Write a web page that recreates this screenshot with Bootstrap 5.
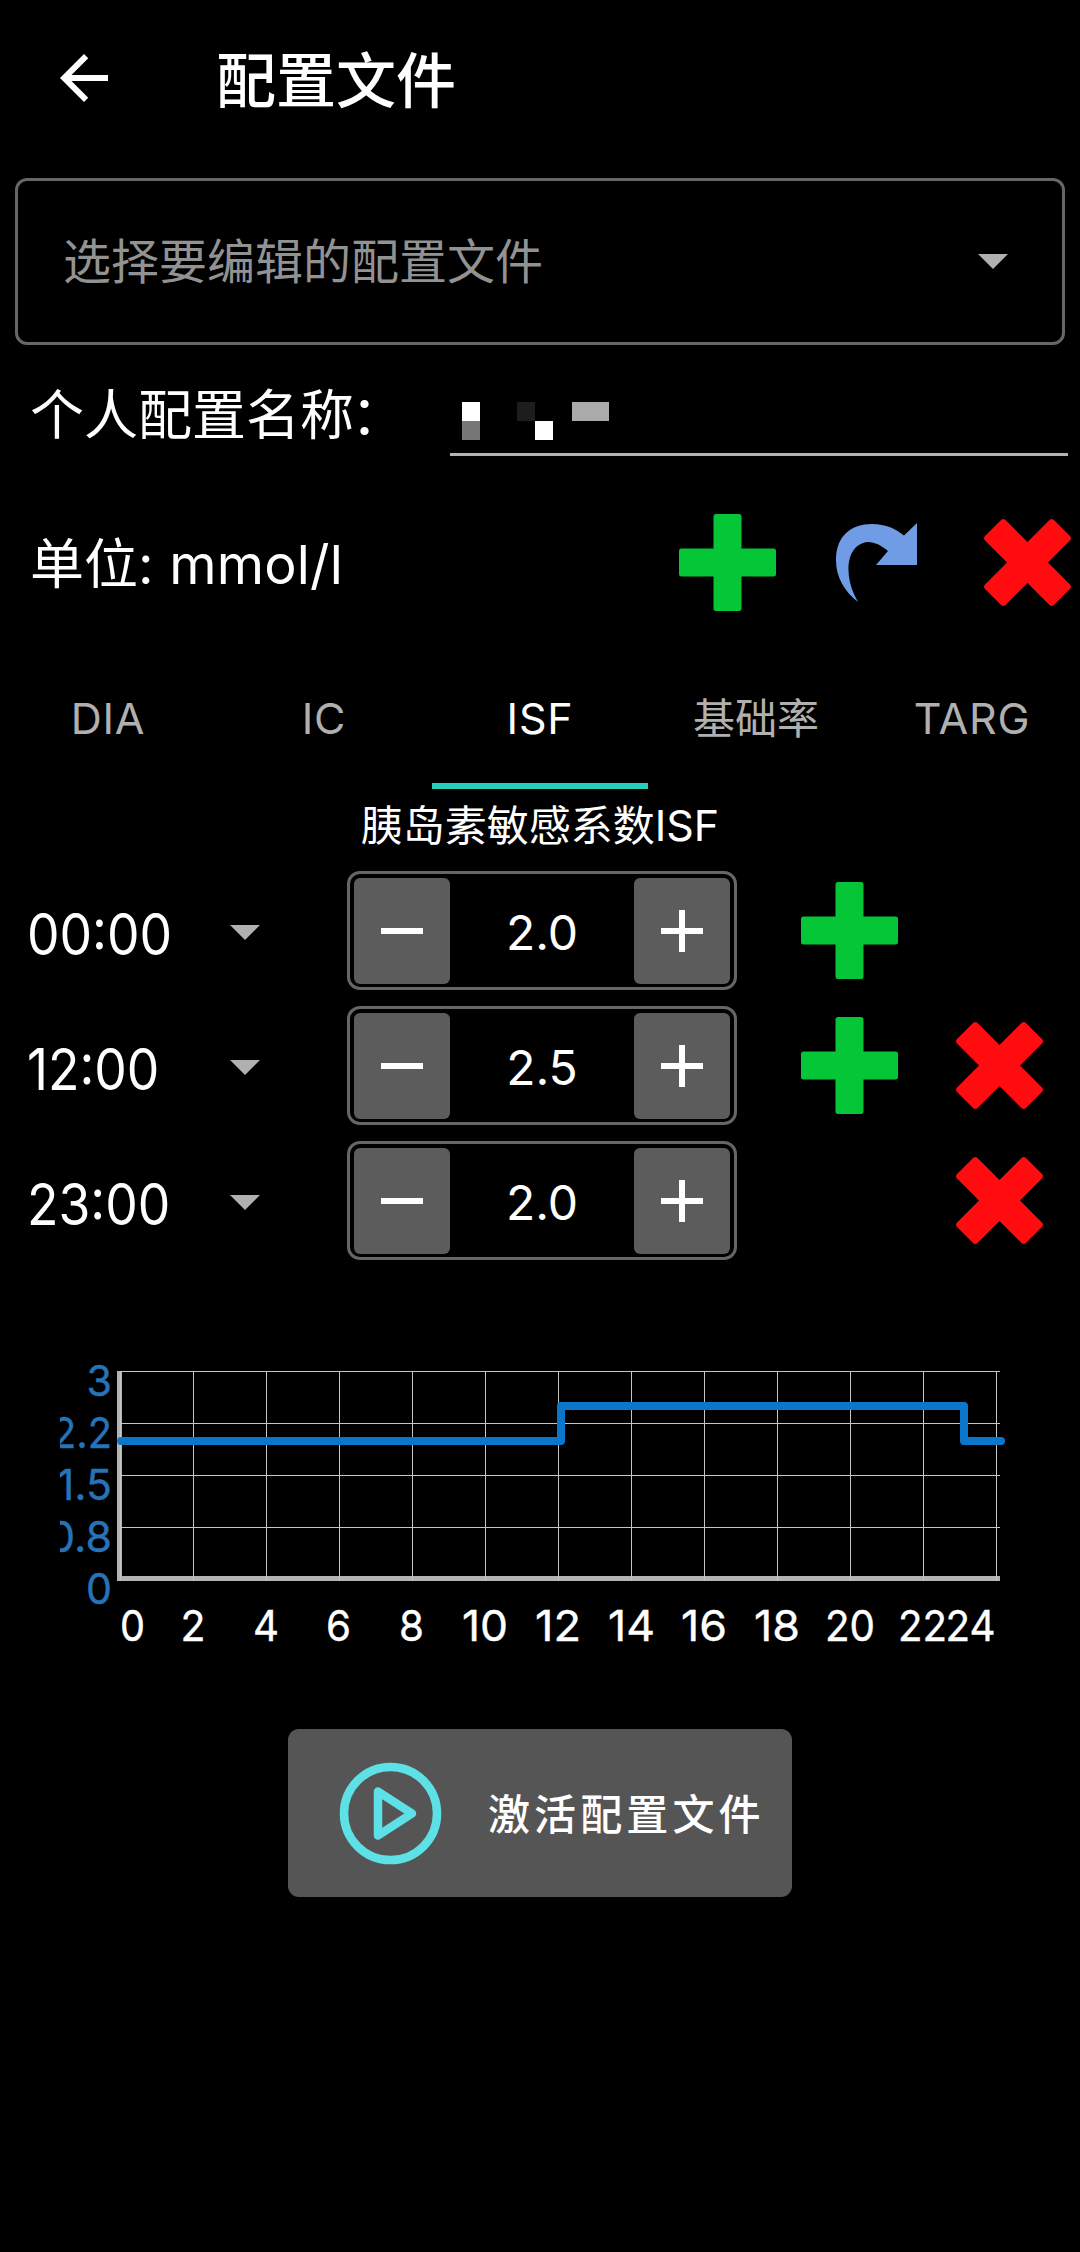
<!DOCTYPE html>
<html lang="zh-CN" data-bs-theme="dark">
<head>
<meta charset="utf-8">
<meta name="viewport" content="width=device-width, initial-scale=1">
<title>配置文件</title>
<link href="https://cdn.jsdelivr.net/npm/bootstrap@5.3.0/dist/css/bootstrap.min.css" rel="stylesheet">
<style>
  body { background: #000; color: #fff; font-family: "Inter", "Noto Sans CJK SC", sans-serif; line-height: 1; }
  .screen { width: 1080px; height: 2252px; overflow: hidden; }
  svg { display: block; flex: none; }
  .top-bar { height: 156px; padding-left: 48px; gap: 96px; }
  .top-title { font-size: 60px; line-height: 72px; font-weight: 500; padding-top: 6px; }
  .profile-select { height: 167px; margin: 22px 15px 0 15px; padding: 0 54px 0 45px; border: 3px solid #666; border-radius: 12px; color: #929292; font-size: 48px; background: none; }
  .name-row { height: 84px; margin-top: 27px; padding: 0 12px 0 30px; font-size: 54px; }
  .name-label { width: 420px; padding-top: 3px; }
  .name-colon { margin-left: -3px; }
  .name-field { border-bottom: 3px solid #b3b3b3; padding: 30px 0 0 12px; }
  .unit-row { height: 106px; margin-top: 53px; padding: 0 9px 0 30px; font-size: 54px; }
  .unit-text { padding-top: 6px; }
  .unit-value { font-size: 54px; letter-spacing: .2px; }
  .icon-undo { margin: 0 67px 0 60px; }
  .tabs-bar { height: 144px; margin-top: 30px; font-size: 43px; letter-spacing: .8px; }
  .tabs-bar .nav-link { color: #b0b0b0; padding: 9px 0 0; border-bottom: 6px solid transparent; border-radius: 0; }
  .tabs-bar .nav-link.active { color: #fff; border-color: #26cfbb; }
  .tab-cjk { font-size: 42px; letter-spacing: 0; }
  .caption-line { height: 74px; padding-bottom: 1px; font-size: 42px; }
  .caption-latin { font-size: 43px; }
  .time-row { height: 135px; }
  .time-pick { width: 347px; padding: 3px 87px 0 27px; font-size: 57px; }
  .time-pick span { transform: scaleX(.905); transform-origin: left center; padding-top: 5px; }
  .time-pick svg { margin-left: -30px; }
  .stepper { width: 390px; height: 119px; border: 3px solid #666; border-radius: 13px; padding: 4px; font-size: 48px; }
  .stepper span { padding-top: 5px; }
  .stepper .btn { width: 96px; height: 106px; background: #5c5c5c; border: 0; border-radius: 6px; padding: 0; }
  .slot-add { width: 97px; margin-left: 64px; }
  .slot-del { width: 87px; margin-left: 58px; }
  .chart-box { margin-top: 72px; height: 320px; }
  .activate { width: 504px; height: 168px; margin-top: 69px; background: #555; border: 0; border-radius: 11px; padding: 0 0 0 51px; gap: 46px; color: #fff; font-size: 42px; font-weight: 500; letter-spacing: 4.1px; }
  .activate span { padding-top: 2px; }
</style>
<script src="https://cdn.jsdelivr.net/npm/bootstrap@5.3.0/dist/js/bootstrap.bundle.min.js"></script>
</head>
<body>
<svg width="0" height="0" class="position-absolute" aria-hidden="true">
  <symbol id="i-add" viewBox="0 0 97 97"><path fill="#04c637" d="M37 0h23q2.500 0 2.500 2.500V34.500H94.500q2.500 0 2.500 2.500V60q0 2.500-2.500 2.500H62.500V94.500q0 2.500-2.500 2.500H37q-2.500 0-2.500-2.500V62.500H2.500Q0 62.500 0 60V37q0-2.500 2.500-2.500H34.500V2.500Q34.500 0 37 0z"/></symbol>
  <symbol id="i-del" viewBox="0 0 87 87"><path fill="#ff0b10" d="M17.300.8q2-1.600 4 0L43.500 23 65.700.8q2-1.600 4 0L86.200 17.300q1.600 2 0 4L64 43.500 86.200 65.700q1.600 2 0 4L69.700 86.200q-2 1.600-4 0L43.500 64 21.300 86.200q-2 1.600-4 0L.8 69.700q-1.600-2 0-4L23 43.500.8 21.300q-1.600-2 0-4z"/></symbol>
  <symbol id="i-caret" viewBox="0 0 30 15"><path fill="#b0b0b0" d="M0 0h30L15 15z"/></symbol>
  <symbol id="i-minus" viewBox="0 0 42 42"><path fill="#fff" d="M0 18h42v6H0z"/></symbol>
  <symbol id="i-plus" viewBox="0 0 42 42"><path fill="#fff" d="M0 18h18V0h6v18h18v6H24v18h-6V24H0z"/></symbol>
</svg>

<main class="screen d-flex flex-column">
  <header class="top-bar d-flex align-items-center flex-shrink-0">
    <svg width="72" height="72" viewBox="0 0 24 24"><path fill="#fff" d="M20 11H7.830l5.590-5.590L12 4l-8 8 8 8 1.410-1.410L7.830 13H20z"/></svg>
    <div class="top-title">配置文件</div>
  </header>

  <div class="profile-select d-flex align-items-center justify-content-between flex-shrink-0" role="button">
    <span>选择要编辑的配置文件</span>
    <svg width="30" height="15"><use href="#i-caret"/></svg>
  </div>

  <div class="name-row d-flex flex-shrink-0">
    <label class="name-label d-flex align-items-center">个人配置名称<span class="name-colon">：</span></label>
    <div class="name-field flex-fill">
      <svg width="150" height="38" viewBox="0 0 150 38" shape-rendering="crispEdges">
        <path fill="#fff" d="M0 0h18v19H0zM73 19h18v19H73z"/>
        <path fill="#777" d="M0 19h18v19H0z"/>
        <path fill="#1d1d1d" d="M55 0h18v19H55z"/>
        <path fill="#aaa" d="M110 0h37v19h-37z"/>
      </svg>
    </div>
  </div>

  <div class="unit-row d-flex align-items-center flex-shrink-0">
    <div class="unit-text flex-fill">单位<span class="unit-value">: mmol/l</span></div>
    <svg width="97" height="97"><use href="#i-add"/></svg>
    <svg class="icon-undo" width="81" height="79" viewBox="0 0 81 79"><path fill="#709ce6" d="M81 0V42H40L52 28C44 21 36 18.500 31 19 18 21 12 33 12.500 48 13 60 17 70 22 79 8 68 0 54 0 37 0 13 15 1 36 1 50 1 60 6 68 12.500z"/></svg>
    <svg width="87" height="87"><use href="#i-del"/></svg>
  </div>

  <nav class="tabs-bar nav nav-justified flex-nowrap flex-shrink-0">
    <a class="nav-link w-100 d-flex align-items-center justify-content-center">DIA</a>
    <a class="nav-link w-100 d-flex align-items-center justify-content-center">IC</a>
    <a class="nav-link active w-100 d-flex align-items-center justify-content-center">ISF</a>
    <a class="nav-link tab-cjk w-100 d-flex align-items-center justify-content-center">基础率</a>
    <a class="nav-link w-100 d-flex align-items-center justify-content-center">TARG</a>
  </nav>

  <div class="caption-line d-flex align-items-center justify-content-center flex-shrink-0"><div>胰岛素敏感系数<span class="caption-latin">ISF</span></div></div>

  <div class="time-row d-flex align-items-center flex-shrink-0">
    <div class="time-pick d-flex align-items-center justify-content-between"><span>00:00</span><svg width="30" height="15"><use href="#i-caret"/></svg></div>
    <div class="stepper d-flex align-items-center justify-content-between">
      <button class="btn d-flex align-items-center justify-content-center"><svg width="42" height="42"><use href="#i-minus"/></svg></button>
      <span>2.0</span>
      <button class="btn d-flex align-items-center justify-content-center"><svg width="42" height="42"><use href="#i-plus"/></svg></button>
    </div>
    <div class="slot-add"><svg width="97" height="97"><use href="#i-add"/></svg></div>
    <div class="slot-del"></div>
  </div>
  <div class="time-row d-flex align-items-center flex-shrink-0">
    <div class="time-pick d-flex align-items-center justify-content-between"><span>12:00</span><svg width="30" height="15"><use href="#i-caret"/></svg></div>
    <div class="stepper d-flex align-items-center justify-content-between">
      <button class="btn d-flex align-items-center justify-content-center"><svg width="42" height="42"><use href="#i-minus"/></svg></button>
      <span>2.5</span>
      <button class="btn d-flex align-items-center justify-content-center"><svg width="42" height="42"><use href="#i-plus"/></svg></button>
    </div>
    <div class="slot-add"><svg width="97" height="97"><use href="#i-add"/></svg></div>
    <div class="slot-del"><svg width="87" height="87"><use href="#i-del"/></svg></div>
  </div>
  <div class="time-row d-flex align-items-center flex-shrink-0">
    <div class="time-pick d-flex align-items-center justify-content-between"><span>23:00</span><svg width="30" height="15"><use href="#i-caret"/></svg></div>
    <div class="stepper d-flex align-items-center justify-content-between">
      <button class="btn d-flex align-items-center justify-content-center"><svg width="42" height="42"><use href="#i-minus"/></svg></button>
      <span>2.0</span>
      <button class="btn d-flex align-items-center justify-content-center"><svg width="42" height="42"><use href="#i-plus"/></svg></button>
    </div>
    <div class="slot-add"></div>
    <div class="slot-del"><svg width="87" height="87"><use href="#i-del"/></svg></div>
  </div>

  <div class="chart-box flex-shrink-0">
    <svg width="1080" height="320" viewBox="0 0 1080 320" font-family="Inter, sans-serif" font-size="43">
      <clipPath id="labelArea"><path d="M60 0h60v320H60z"/></clipPath>
      <path stroke="#b3b3b3" stroke-width="5" fill="none" d="M119.500 31v210M117 238.500h883"/>
      <path stroke="#c4c8c4" fill="none" d="M120 31.500h880M120 83.500h880M120 135.500h880M120 187.500h880M120.500 31v210M193.500 31v210M266.500 31v210M339.500 31v210M412.500 31v210M485.500 31v210M558.500 31v210M631.500 31v210M704.500 31v210M777.500 31v210M850.500 31v210M923.500 31v210M996.500 31v210"/>
      <path stroke="#0b77cc" stroke-width="8" stroke-linecap="round" stroke-linejoin="round" fill="none" d="M121 101H561V66H964V101H1001"/>
      <g fill="#2673b8" stroke="#2673b8" stroke-width=".4" clip-path="url(#labelArea)">
        <text x="86.500" y="55.500" textLength="25.500" lengthAdjust="spacingAndGlyphs">3</text>
        <text x="52" y="107.500" textLength="60" lengthAdjust="spacingAndGlyphs">2.2</text>
        <text x="57" y="159.500" textLength="55" lengthAdjust="spacingAndGlyphs">1.5</text>
        <text x="48" y="211.500" textLength="64" lengthAdjust="spacingAndGlyphs">0.8</text>
        <text x="86" y="263.500" textLength="26" lengthAdjust="spacingAndGlyphs">0</text>
      </g>
      <g fill="#fff" stroke="#fff" stroke-width=".4">
        <text x="120" y="301" textLength="25" lengthAdjust="spacingAndGlyphs">0</text>
        <text x="180.500" y="301" textLength="25" lengthAdjust="spacingAndGlyphs">2</text>
        <text x="253" y="301" textLength="26" lengthAdjust="spacingAndGlyphs">4</text>
        <text x="326" y="301" textLength="25" lengthAdjust="spacingAndGlyphs">6</text>
        <text x="399" y="301" textLength="25" lengthAdjust="spacingAndGlyphs">8</text>
        <text x="462" y="301" textLength="46" lengthAdjust="spacingAndGlyphs">10</text>
        <text x="535" y="301" textLength="46" lengthAdjust="spacingAndGlyphs">12</text>
        <text x="608" y="301" textLength="47" lengthAdjust="spacingAndGlyphs">14</text>
        <text x="681" y="301" textLength="46" lengthAdjust="spacingAndGlyphs">16</text>
        <text x="754" y="301" textLength="46" lengthAdjust="spacingAndGlyphs">18</text>
        <text x="825" y="301" textLength="50" lengthAdjust="spacingAndGlyphs">20</text>
        <text x="898" y="301" textLength="49" lengthAdjust="spacingAndGlyphs">22</text>
        <text x="945.500" y="301" textLength="50" lengthAdjust="spacingAndGlyphs">24</text>
      </g>
    </svg>
  </div>

  <button class="activate btn d-flex align-items-center align-self-center flex-shrink-0">
    <svg width="103" height="103" viewBox="0 0 103 103" fill="none" stroke="#5de0e6" stroke-width="8.500" stroke-linejoin="round"><circle cx="51.500" cy="51.500" r="46.500"/><path d="M39 29.500v44l34-22z"/></svg>
    <span>激活配置文件</span>
  </button>
</main>
</body>
</html>
